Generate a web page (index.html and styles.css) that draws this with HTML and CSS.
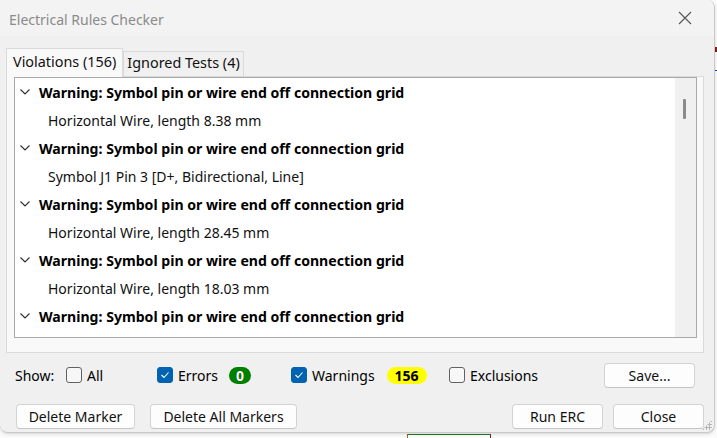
FILE: index.html
```html
<!DOCTYPE html>
<html>
<head>
<meta charset="utf-8">
<link rel="stylesheet" href="styles.css">
</head>
<body>
<div class="canvas">
  <div class="cv-line cv-red"></div>
  <div class="cv-line cv-blue"></div>
  <div class="cv-line cv-green"></div>
</div>
<div class="window">
  <div class="titlebar">
    <span class="title">Electrical Rules Checker</span>
    <svg class="close" width="14" height="14" viewBox="0 0 14 14"><path d="M1 1 L13 13 M13 1 L1 13" stroke="#555" stroke-width="1.1" fill="none"/></svg>
  </div>
  <div class="content">
    <div class="tabs">
      <div class="tab active">Violations (156)</div>
      <div class="tab">Ignored Tests (4)</div>
    </div>
    <div class="panel">
      <div class="list">
        <div class="rows">
          <div class="row head"><svg class="chev" width="10" height="6" viewBox="0 0 10 6"><path d="M0.5 0.5 L5 5 L9.5 0.5" stroke="#333" stroke-width="1.2" fill="none"/></svg><span>Warning: Symbol pin or wire end off connection grid</span></div>
          <div class="row detail">Horizontal Wire, length 8.38 mm</div>
          <div class="row head"><svg class="chev" width="10" height="6" viewBox="0 0 10 6"><path d="M0.5 0.5 L5 5 L9.5 0.5" stroke="#333" stroke-width="1.2" fill="none"/></svg><span>Warning: Symbol pin or wire end off connection grid</span></div>
          <div class="row detail">Symbol J1 Pin 3 [D+, Bidirectional, Line]</div>
          <div class="row head"><svg class="chev" width="10" height="6" viewBox="0 0 10 6"><path d="M0.5 0.5 L5 5 L9.5 0.5" stroke="#333" stroke-width="1.2" fill="none"/></svg><span>Warning: Symbol pin or wire end off connection grid</span></div>
          <div class="row detail">Horizontal Wire, length 28.45 mm</div>
          <div class="row head"><svg class="chev" width="10" height="6" viewBox="0 0 10 6"><path d="M0.5 0.5 L5 5 L9.5 0.5" stroke="#333" stroke-width="1.2" fill="none"/></svg><span>Warning: Symbol pin or wire end off connection grid</span></div>
          <div class="row detail">Horizontal Wire, length 18.03 mm</div>
          <div class="row head"><svg class="chev" width="10" height="6" viewBox="0 0 10 6"><path d="M0.5 0.5 L5 5 L9.5 0.5" stroke="#333" stroke-width="1.2" fill="none"/></svg><span>Warning: Symbol pin or wire end off connection grid</span></div>
        </div>
        <div class="scrollbar"><div class="thumb"></div></div>
      </div>
    </div>
    <div class="show-row">
      <span class="show-label">Show:</span>
      <label class="opt opt-all"><span class="cb"></span>All</label>
      <label class="opt opt-errors"><span class="cb checked"><svg width="10" height="8" viewBox="0 0 10 8"><path d="M1.5 4 L4 6.5 L8.5 1.5" stroke="#fff" stroke-width="1.1" fill="none"/></svg></span>Errors<span class="badge badge-green">0</span></label>
      <label class="opt opt-warn"><span class="cb checked"><svg width="10" height="8" viewBox="0 0 10 8"><path d="M1.5 4 L4 6.5 L8.5 1.5" stroke="#fff" stroke-width="1.1" fill="none"/></svg></span>Warnings<span class="badge badge-yellow">156</span></label>
      <label class="opt opt-excl"><span class="cb"></span>Exclusions</label>
      <button class="btn btn-save">Save...</button>
    </div>
    <div class="button-row">
      <button class="btn btn-dm">Delete Marker</button>
      <button class="btn btn-dam">Delete All Markers</button>
      <span class="spacer"></span>
      <button class="btn btn-run">Run ERC</button>
      <button class="btn btn-close">Close</button>
    </div>
  </div>
  <div class="grip"></div>
</div>
</body>
</html>
```
FILE: styles.css
```css
html, body {
  margin: 0;
  padding: 0;
  width: 717px;
  height: 438px;
  overflow: hidden;
  background: #ffffff;
  font-family: "Noto Sans", "Open Sans", sans-serif;
  font-size: 14px;
  color: #000;
}
.canvas {
  position: absolute;
  inset: 0;
  background: #fafafa;
}
.cv-line { position: absolute; }
.cv-red { left: 714px; top: 47px; width: 3px; height: 5px; background: #8b1a1a; }
.cv-blue { left: 714px; top: 70px; width: 3px; height: 1px; background: #2a3f9a; }
.cv-green { left: 407px; top: 434px; width: 84px; height: 6px; border-top: 1px solid #1f7a1f; border-left: 1px solid #b06020; border-right: 1px solid #8b1a1a; box-sizing: border-box; }
.window {
  position: relative;
  width: 714px;
  height: 432px;
  background: #f0f0f0;
  border: 1px solid #c9c9c9;
  border-top: none;
  border-left: none;
  border-radius: 0 8px 8px 8px;
  box-shadow: 0 1px 3px rgba(0,0,0,0.15);
  overflow: hidden;
  display: flex;
  flex-direction: column;
}
.titlebar {
  height: 36px;
  flex: none;
  background: #f3f3f3;
  display: flex;
  align-items: center;
  padding-left: 9px;
  padding-right: 22px;
}
.title {
  font-size: 14px;
  color: #8a8a8a;
  flex: 1;
  position: relative;
  top: 1px;
}
.close { display: block; }
.content {
  flex: 1;
  display: flex;
  flex-direction: column;
  padding: 12px 10px 0 6px;
}
.tabs {
  display: flex;
  align-items: flex-end;
  height: 28px;
  position: relative;
  z-index: 1;
}
.tab {
  height: 25px;
  box-sizing: border-box;
  padding: 0 3px;
  border: 1px solid #dadada;
  border-bottom: none;
  background: #f0f0f0;
  line-height: 22px;
  font-size: 14.4px;
  color: #111;
}
.tab.active {
  height: 29px;
  line-height: 25px;
  background: #f9f9f9;
  border-color: #dadada;
  margin-bottom: -1px;
  padding: 0 6px;
}
.panel {
  height: 277px;
  box-sizing: border-box;
  background: #f9f9f9;
  border: 1px solid #dadada;
  padding: 0 6px 14px 7px;
  display: flex;
  flex-direction: column;
}
.list {
  flex: 1;
  background: #fff;
  border: 1px solid #a9a9a9;
  display: flex;
  overflow: hidden;
}
.rows {
  flex: 1;
  padding-top: 0;
  overflow: hidden;
}
.row {
  height: 28px;
  display: flex;
  align-items: center;
  white-space: nowrap;
  font-size: 14px;
}
.row.head {
  font-weight: 700;
  padding-left: 5px;
  font-size: 14.1px;
}
.chev { margin-right: 9px; flex: none; }
.row.detail {
  padding-left: 33px;
  color: #111;
}
.scrollbar {
  width: 21px;
  flex: none;
  background: #f0f0f0;
  position: relative;
  padding-top: 21px;
}
.thumb {
  width: 3px;
  height: 20px;
  margin-left: 8px;
  background: #8a8a8a;
  border-radius: 1px;
}
.show-row {
  height: 44px;
  display: flex;
  align-items: center;
  padding-left: 9px;
  box-sizing: border-box;
}
.show-label { width: 51px; }
.opt {
  display: flex;
  align-items: center;
}
.opt-all { width: 91px; }
.opt-errors { width: 134px; }
.opt-warn { width: 158px; }
.opt-excl { width: 155px; }
.cb {
  width: 14px;
  height: 14px;
  border: 1px solid #616161;
  border-radius: 3px;
  background: #f7f7f7;
  margin-right: 5px;
  display: flex;
  align-items: center;
  justify-content: center;
  flex: none;
}
.cb.checked {
  background: #0063b1;
  border-color: #0063b1;
}
.cb svg { display: block; }
.badge {
  height: 17px;
  border-radius: 9px;
  font-weight: 700;
  font-size: 14px;
  line-height: 17px;
  text-align: center;
  display: inline-block;
}
.badge-green {
  background: #008000;
  color: #fff;
  width: 22px;
  margin-left: 11px;
  text-shadow: 0 0 1px #003000;
}
.badge-yellow {
  background: #ffff00;
  color: #000;
  width: 40px;
  margin-left: 12px;
}
.btn {
  font-family: inherit;
  font-size: 14px;
  color: #111;
  background: #fdfdfd;
  border: 1px solid #d3d3d3;
  border-bottom-color: #c4c4c4;
  border-radius: 4px;
  height: 25px;
  padding: 0;
  box-sizing: border-box;
}
.btn-save { width: 91px; }
.button-row {
  display: flex;
  align-items: center;
  padding-left: 10px;
  padding-top: 7px;
}
.btn-dm { width: 119px; }
.btn-dam { width: 147px; margin-left: 15px; }
.spacer { flex: 1; }
.btn-run { width: 91px; }
.btn-close { width: 91px; margin-left: 10px; }
.grip {
  position: absolute;
  right: 2px;
  bottom: 2px;
  width: 10px;
  height: 10px;
  background-image: radial-gradient(circle, #b5b5b5 1px, transparent 1.2px);
  background-size: 3px 3px;
  clip-path: polygon(100% 0, 100% 100%, 0 100%);
}
```
